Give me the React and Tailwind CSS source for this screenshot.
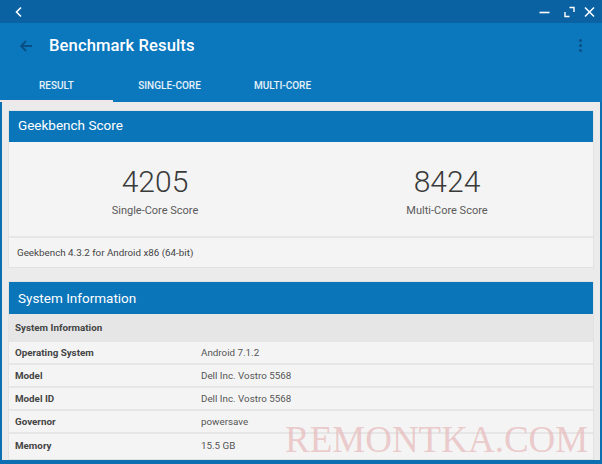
import React from "react";

const rows = [
  ["Operating System", "Android 7.1.2"],
  ["Model", "Dell Inc. Vostro 5568"],
  ["Model ID", "Dell Inc. Vostro 5568"],
  ["Governor", "powersave"],
  ["Memory", "15.5 GB"],
];

export default function App() {
  return (
    <div
      className="relative w-[602px] h-[464px] overflow-hidden bg-[#0b6fb1] px-[2px] pb-[4px] flex flex-col"
      style={{ fontFamily: "Roboto, 'Noto Sans', sans-serif" }}
    >
      {/* title bar */}
      <div className="-mx-[2px] h-[23px] bg-[#0a62a2] flex items-center px-[12px] shrink-0">
        <svg width="10" height="12" viewBox="0 0 10 12" className="ml-[2px]">
          <path d="M7 1.5 L2.5 6 L7 10.5" stroke="white" strokeWidth="1.6" fill="none" />
        </svg>
        <div className="ml-auto mr-[-5px] flex items-center">
          <svg width="11" height="12" viewBox="0 0 11 12">
            <path d="M0.5 6.5 H10.5" stroke="white" strokeWidth="1.6" />
          </svg>
          <svg width="11" height="12" viewBox="0 0 11 12" className="ml-[14px]">
            <path d="M1 6 V10.5 H5.5 M5.5 1.5 H10 V6" stroke="white" strokeWidth="1.4" fill="none" />
          </svg>
          <svg width="11" height="12" viewBox="0 0 11 12" className="ml-[9px]">
            <path d="M1 1.5 L10 10.5 M10 1.5 L1 10.5" stroke="white" strokeWidth="1.5" />
          </svg>
        </div>
      </div>
      {/* app bar */}
      <div className="h-[45px] bg-[#0b78be] -mx-[2px] flex items-center px-[19px] shrink-0">
        <svg width="14" height="14" viewBox="0 0 14 14" className="mt-[1px]">
          <path d="M13 7 H2 M7 2 L2 7 L7 12" stroke="#0a4f84" strokeWidth="1.8" fill="none" />
        </svg>
        <span className="ml-[16px] mt-[2px] text-white text-[16.6px] font-medium tracking-[0.1px]">Benchmark Results</span>
        <div className="ml-auto mr-[1px] flex flex-col gap-[2px]">
          <span className="w-[3px] h-[3px] rounded-full bg-[#0a4f84]" />
          <span className="w-[3px] h-[3px] rounded-full bg-[#0a4f84]" />
          <span className="w-[3px] h-[3px] rounded-full bg-[#0a4f84]" />
        </div>
      </div>
      {/* tabs */}
      <div className="h-[34px] bg-[#0b78be] -mx-[2px] flex shrink-0">
        {[
          ["RESULT", true],
          ["SINGLE-CORE", false],
          ["MULTI-CORE", false],
        ].map(([t, a]) => (
          <div key={t} className="w-[113px] flex flex-col">
            <div className="flex-1 flex items-center justify-center text-[10px] font-medium text-white/90 pt-[3px]">{t}</div>
            <div className={a ? "h-[2px] bg-[#f4e6e6]" : "h-[2px]"} />
          </div>
        ))}
      </div>
      {/* content */}
      <div className="flex-1 bg-[#ebebeb] px-[6px] pt-[8px] flex flex-col gap-[13px] overflow-hidden">
        {/* card 1 */}
        <div className="bg-[#f4f4f4] border border-[#e2e2e2]">
          <div className="h-[31px] bg-[#0b75b9] flex items-center px-[9px] text-white text-[13.5px] pb-[2px]">Geekbench Score</div>
          <div className="h-[96px] grid grid-cols-2 border-b-2 border-[#e6e6e6]">
            <div className="flex flex-col items-center pt-[22px]">
              <span className="text-[30px] leading-[36px] text-[#3a3a3a] font-light">4205</span>
              <span className="text-[11px] text-[#5a5a5a] mt-[3px]">Single-Core Score</span>
            </div>
            <div className="flex flex-col items-center pt-[22px]">
              <span className="text-[30px] leading-[36px] text-[#3a3a3a] font-light">8424</span>
              <span className="text-[11px] text-[#5a5a5a] mt-[3px]">Multi-Core Score</span>
            </div>
          </div>
          <div className="h-[29px] flex items-center px-[8px] pt-[1px] text-[9.8px] text-[#444]">Geekbench 4.3.2 for Android x86 (64-bit)</div>
        </div>
        {/* card 2 */}
        <div className="bg-[#f4f4f4] border border-[#e2e2e2] flex-1">
          <div className="h-[32px] bg-[#0b75b9] flex items-center px-[9px] text-white text-[13.5px]">System Information</div>
          <div className="h-[28px] bg-[#e6e6e6] flex items-center px-[6px] pt-[1px] text-[9.8px] font-bold text-[#444]">System Information</div>
          {rows.map(([k, v]) => (
            <div key={k} className="h-[23px] flex items-center px-[6px] border-b-2 border-[#e6e6e6] last:border-b-0 text-[9.8px] pt-[2px]">
              <span className="w-[186px] font-bold text-[#444]">{k}</span>
              <span className="text-[#555]">{v}</span>
            </div>
          ))}
        </div>
      </div>
      {/* watermark */}
      <div
        className="absolute left-[285px] top-[421px] leading-none text-[37px] text-[#e6b8b8]/70 pointer-events-none"
        style={{ fontFamily: "'Liberation Serif', serif" }}
      >
        REMONTKA.COM
      </div>
    </div>
  );
}
